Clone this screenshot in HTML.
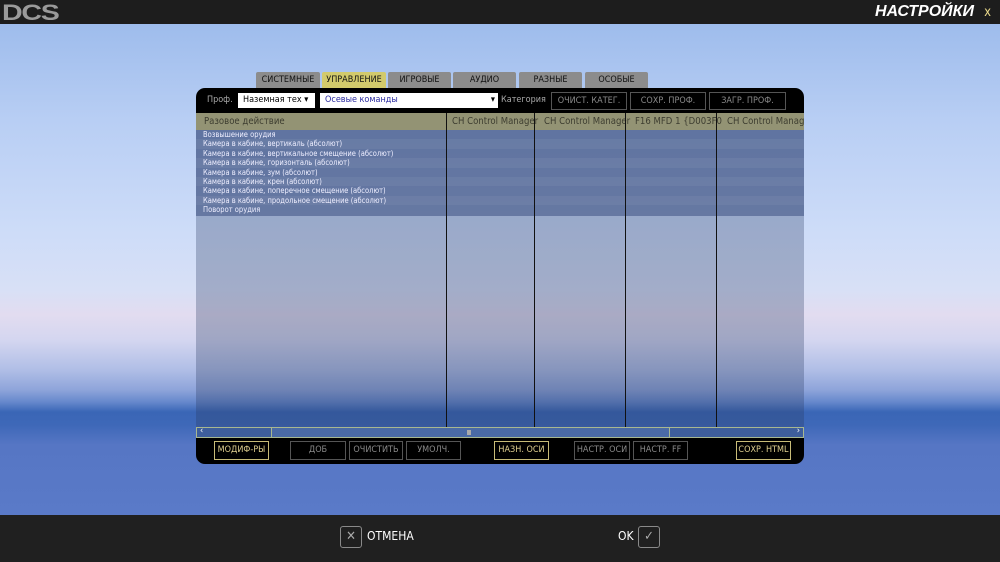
<!DOCTYPE html>
<html><head><meta charset="utf-8"><style>
*{margin:0;padding:0;box-sizing:border-box}
body{width:1000px;height:562px;overflow:hidden;position:relative;font-family:"DejaVu Sans Condensed","DejaVu Sans","Liberation Sans",sans-serif;
background:linear-gradient(180deg,#9ebcec 24px,#b8cef4 120px,#cddcf8 230px,#d8e0f6 290px,#e2dcf0 315px,#d4d6f0 340px,#b0bee6 370px,#8ea4da 390px,#6688cc 402px,#3a66b6 412px,#3e68b8 425px,#5676c4 445px,#5a7ac8 515px)}
.top{position:absolute;left:0;top:0;width:1000px;height:24px;background:#1d1d1d}
.logo{position:absolute;left:2px;top:0px;font:bold 22px "Liberation Sans",sans-serif;color:#9a9a9a;letter-spacing:-1px;transform:scaleX(1.3);transform-origin:left}
.title{position:absolute;right:26px;top:3px;font:italic bold 16px "Liberation Sans",sans-serif;color:#fff}
.x{position:absolute;right:9px;top:5px;color:#e8d88a;font-size:13px}
.bot{position:absolute;left:0;top:515px;width:1000px;height:47px;background:#202020}
.ib{position:absolute;top:526px;width:22px;height:22px;border:1px solid #8a8a8a;border-radius:3px;color:#aaa;font-size:13px;text-align:center;line-height:20px}
.bl{position:absolute;top:529px;color:#fff;font-size:12px}
.tab{position:absolute;top:72px;height:16px;background:#8c8c8c;color:#111;font-size:9px;text-align:center;line-height:16px;border-radius:2px 2px 0 0}
.dlgt{position:absolute;left:196px;top:88px;width:608px;height:25px;background:#000;border-radius:9px 9px 0 0}
.dlgb{position:absolute;left:196px;top:437px;width:608px;height:27px;background:#000;border-radius:0 0 9px 9px}
.sel{position:absolute;top:93px;height:15px;background:#fff;font-size:9px;line-height:15px;padding-left:5px}
.btn{position:absolute;height:19px;border:1px solid #555;color:#8a8a8a;font-size:9px;text-align:center;line-height:17px}
.y{border-color:#c8bc78;color:#e0d090}
.hdr{position:absolute;left:196px;top:113px;width:608px;height:17px;background:#939374;color:#3d3d30;font-size:9.5px;line-height:17px;overflow:hidden;white-space:nowrap}
.rows{position:absolute;left:196px;top:130px;width:608px;height:86px;background:rgba(40,60,110,.62)}
.rest{position:absolute;left:196px;top:216px;width:608px;height:211px;background:rgba(40,55,95,.3)}
.rows div{height:9.4px;font-size:7.5px;color:#eef;line-height:9.4px;padding-left:7px}
.rows div:nth-child(even){background:rgba(255,255,255,.05)}
.vl{position:absolute;top:113px;width:1px;height:314px;background:#111}
.sb{position:absolute;left:196px;top:427px;width:608px;height:11px;background:#3e5e9c;border:1px solid #a8b890}
</style></head><body>
<div class="top"><div class="logo">DCS</div><div class="title">НАСТРОЙКИ</div><div class="x">x</div></div>
<div class="tab" style="left:256px;width:64px">СИСТЕМНЫЕ</div>
<div class="tab" style="left:322px;width:64px;background:#d2ca6c">УПРАВЛЕНИЕ</div>
<div class="tab" style="left:388px;width:63px">ИГРОВЫЕ</div>
<div class="tab" style="left:453px;width:63px">АУДИО</div>
<div class="tab" style="left:519px;width:63px">РАЗНЫЕ</div>
<div class="tab" style="left:585px;width:63px">ОСОБЫЕ</div>
<div class="dlgt"></div><div class="dlgb"></div>
<div style="position:absolute;left:207px;top:95px;color:#aaa;font-size:9px">Проф.</div>
<div class="sel" style="left:238px;width:77px">Наземная тех ▾</div>
<div class="sel" style="left:320px;width:178px;color:#2a2aa0">Осевые команды<span style="position:absolute;right:3px;color:#000">▾</span></div>
<div style="position:absolute;left:501px;top:95px;color:#aaa;font-size:9px">Категория</div>
<div class="btn" style="left:551px;top:92px;width:76px;height:18px">ОЧИСТ. КАТЕГ.</div>
<div class="btn" style="left:630px;top:92px;width:76px;height:18px">СОХР. ПРОФ. КАК</div>
<div class="btn" style="left:709px;top:92px;width:77px;height:18px">ЗАГР. ПРОФ.</div>
<div class="hdr"><span style="position:absolute;left:8px">Разовое действие</span><span style="position:absolute;left:256px">CH Control Manager</span><span style="position:absolute;left:348px">CH Control Manager</span><span style="position:absolute;left:439px">F16 MFD 1 {D003F0</span><span style="position:absolute;left:531px">CH Control Manage</span></div>
<div class="rows"><div>Возвышение орудия</div><div>Камера в кабине, вертикаль (абсолют)</div><div>Камера в кабине, вертикальное смещение (абсолют)</div><div>Камера в кабине, горизонталь (абсолют)</div><div>Камера в кабине, зум (абсолют)</div><div>Камера в кабине, крен (абсолют)</div><div>Камера в кабине, поперечное смещение (абсолют)</div><div>Камера в кабине, продольное смещение (абсолют)</div><div>Поворот орудия</div></div>
<div class="rest"></div>
<div class="vl" style="left:446px"></div><div class="vl" style="left:534px"></div><div class="vl" style="left:625px"></div><div class="vl" style="left:716px"></div>
<div class="sb"><div style="position:absolute;left:74px;top:-1px;width:399px;height:11px;border:1px solid #a8b890;background:#4a6aa6"></div><span style="position:absolute;left:3px;top:-2px;color:#fff;font-size:9px">‹</span><span style="position:absolute;right:3px;top:-2px;color:#fff;font-size:9px">›</span><div style="position:absolute;left:270px;top:2px;width:4px;height:5px;background:#aaa"></div></div>
<div class="btn y" style="left:214px;top:441px;width:55px">МОДИФ-РЫ</div>
<div class="btn" style="left:290px;top:441px;width:56px">ДОБ</div>
<div class="btn" style="left:349px;top:441px;width:54px">ОЧИСТИТЬ</div>
<div class="btn" style="left:406px;top:441px;width:55px">УМОЛЧ.</div>
<div class="btn y" style="left:494px;top:441px;width:55px">НАЗН. ОСИ</div>
<div class="btn" style="left:574px;top:441px;width:56px">НАСТР. ОСИ</div>
<div class="btn" style="left:633px;top:441px;width:55px">НАСТР. FF</div>
<div class="btn y" style="left:736px;top:441px;width:55px">СОХР. HTML</div>
<div class="bot"></div>
<div class="ib" style="left:340px">✕</div><div class="bl" style="left:367px">ОТМЕНА</div>
<div class="bl" style="left:618px">OK</div><div class="ib" style="left:638px">✓</div>
</body></html>
